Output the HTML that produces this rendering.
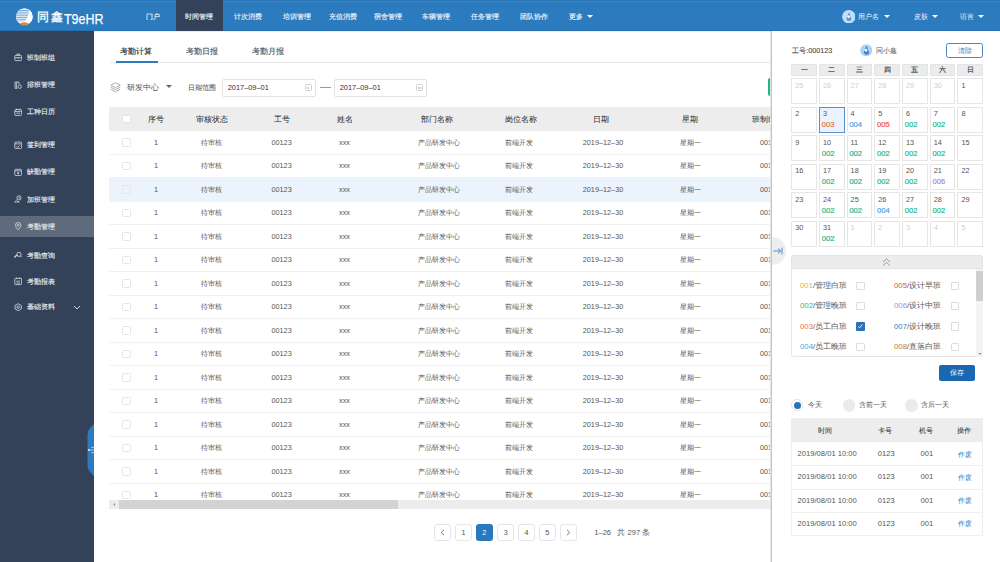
<!DOCTYPE html><html><head><meta charset="utf-8"><style>
*{margin:0;padding:0;box-sizing:border-box}
html,body{width:1000px;height:562px;overflow:hidden;background:#fff}
body{position:relative;font-family:"Liberation Sans",sans-serif;color:#555;font-size:7.5px;line-height:1}
div,span{position:absolute}
.t{white-space:nowrap;line-height:1}
.c{transform:translateX(-50%)}
.arr{width:0;height:0;border-left:3.1px solid transparent;border-right:3.1px solid transparent;border-top:3.6px solid #fff}
</style></head><body>
<div style="left:0px;top:0px;width:1000px;height:31px;background:#2c7bbf"></div>
<div style="left:0px;top:0px;width:1000px;height:1px;background:#2a76b6"></div>
<div style="left:0px;top:1px;width:1000px;height:1px;background:#3585c6"></div>
<div style="left:0px;top:30px;width:1000px;height:1px;background:#2870b0"></div>
<div style="left:94px;top:31px;width:906px;height:1px;background:#e3eef8"></div>
<div style="left:176px;top:0px;width:46.5px;height:31px;background:#344259"></div>
<svg style="position:absolute;left:15px;top:7.5px" width="19" height="19" viewBox="0 0 19 19">
<defs><clipPath id="lc"><circle cx="9.4" cy="8.7" r="8.3"/></clipPath></defs>
<circle cx="9.4" cy="8.7" r="8.3" fill="#fff"/>
<g clip-path="url(#lc)">
<path d="M0 0 H13.6 Q15.2 7 9 14.5 H0Z" fill="#d9e9f7"/>
<path d="M0 2.6h14M0 4.9h14M0 7.2h14M0 9.5h14M0 11.8h14" stroke="#7fb0de" stroke-width="1.05"/>
<path d="M13.6 0 Q15.2 7 9 14.5 L19 19 V0Z" fill="#fff"/>
</g>
<ellipse cx="9.4" cy="15.9" rx="3.8" ry="1.6" fill="#e08a34"/>
</svg>
<div class="t" style="left:37px;top:10.5px;font-size:11.6px;color:#fff;letter-spacing:2px;-webkit-text-stroke:0.3px #fff">同鑫</div>
<div class="t" style="left:63.8px;top:10.6px;font-size:15px;color:#fff;transform:scaleX(0.83);transform-origin:left;-webkit-text-stroke:0.25px #fff">T9eHR</div>
<div class="t c" style="left:153px;top:12.8px;font-size:7.4px;color:#eef3f9;-webkit-text-stroke:0.15px #eef3f9">门户</div>
<div class="t c" style="left:199px;top:12.8px;font-size:7.4px;color:#eef3f9;-webkit-text-stroke:0.15px #eef3f9">时间管理</div>
<div class="t c" style="left:248px;top:12.8px;font-size:7.4px;color:#eef3f9;-webkit-text-stroke:0.15px #eef3f9">计次消费</div>
<div class="t c" style="left:297px;top:12.8px;font-size:7.4px;color:#eef3f9;-webkit-text-stroke:0.15px #eef3f9">培训管理</div>
<div class="t c" style="left:342.5px;top:12.8px;font-size:7.4px;color:#eef3f9;-webkit-text-stroke:0.15px #eef3f9">充值消费</div>
<div class="t c" style="left:387.5px;top:12.8px;font-size:7.4px;color:#eef3f9;-webkit-text-stroke:0.15px #eef3f9">宿舍管理</div>
<div class="t c" style="left:436px;top:12.8px;font-size:7.4px;color:#eef3f9;-webkit-text-stroke:0.15px #eef3f9">车辆管理</div>
<div class="t c" style="left:485px;top:12.8px;font-size:7.4px;color:#eef3f9;-webkit-text-stroke:0.15px #eef3f9">任务管理</div>
<div class="t c" style="left:534px;top:12.8px;font-size:7.4px;color:#eef3f9;-webkit-text-stroke:0.15px #eef3f9">团队协作</div>
<div class="t c" style="left:575.5px;top:12.8px;font-size:7.4px;color:#eef3f9;-webkit-text-stroke:0.15px #eef3f9">更多</div>
<div class="arr" style="left:586.8px;top:14.8px"></div>
<svg style="position:absolute;left:841.6px;top:9.6px" width="13.6" height="13.6" viewBox="0 0 13 13">
<circle cx="6.5" cy="6.5" r="6.4" fill="#bfdffa"/>
<path d="M6.8 2.2 L5.3 5 L4.2 8.2 Q4 10.3 6.3 10.6 Q8.6 10.6 9 9 L8.3 6.8 Z" fill="#5d93cf"/>
<path d="M5.2 5.2 Q6.2 4.6 7.8 6 L6.8 7.8 Q5.6 7.6 5 6.6Z" fill="#fff"/>
</svg>
<div class="t" style="left:858px;top:12.8px;font-size:7.3px;color:#eef4fa">用户名</div>
<div class="arr" style="left:883.6px;top:14.9px"></div>
<div class="t" style="left:914px;top:12.8px;font-size:7.3px;color:#eef4fa">皮肤</div>
<div class="arr" style="left:931.6px;top:14.9px"></div>
<div class="t" style="left:960px;top:12.8px;font-size:7.3px;color:#eef4fa">语言</div>
<div class="arr" style="left:977.6px;top:14.9px"></div>
<div style="left:0px;top:31px;width:94px;height:531px;background:#344259"></div>
<div style="left:0px;top:216px;width:94px;height:20.5px;background:#5f6b7c"></div>
<div class="t" style="left:26.7px;top:53.800000000000004px;font-size:7.3px;color:#e6e9ee;-webkit-text-stroke:0.15px #e6e9ee">班制班组</div>
<svg style="position:absolute;left:13.8px;top:53.4px" width="8.4" height="8.4" viewBox="0 0 16 16" fill="none" stroke="#d3d8e0" stroke-width="1.6"><rect x="1.5" y="4.5" width="13" height="10" rx="2"/><path d="M5.5 4.5V2.2h5v2.3M1.5 9h13"/><rect x="7" y="8" width="2" height="2.5" fill="#d3d8e0" stroke="none"/></svg>
<div class="t" style="left:26.7px;top:81.4px;font-size:7.3px;color:#e6e9ee;-webkit-text-stroke:0.15px #e6e9ee">排班管理</div>
<svg style="position:absolute;left:13.8px;top:81.0px" width="8.4" height="8.4" viewBox="0 0 16 16" fill="none" stroke="#d3d8e0" stroke-width="1.6"><path d="M9.5 6.5V2H2v12h4"/><path d="M4.5 2v12"/><circle cx="10.8" cy="10.8" r="3.3"/></svg>
<div class="t" style="left:26.7px;top:108.4px;font-size:7.3px;color:#e6e9ee;-webkit-text-stroke:0.15px #e6e9ee">工种日历</div>
<svg style="position:absolute;left:13.8px;top:108.0px" width="8.4" height="8.4" viewBox="0 0 16 16" fill="none" stroke="#d3d8e0" stroke-width="1.6"><rect x="1.5" y="3" width="13" height="11.5" rx="2"/><path d="M4.5 1v3M11.5 1v3M1.5 6.5h13M4.5 10h7"/></svg>
<div class="t" style="left:26.7px;top:141.29999999999998px;font-size:7.3px;color:#e6e9ee;-webkit-text-stroke:0.15px #e6e9ee">签到管理</div>
<svg style="position:absolute;left:13.8px;top:140.9px" width="8.4" height="8.4" viewBox="0 0 16 16" fill="none" stroke="#d3d8e0" stroke-width="1.6"><rect x="1.5" y="2" width="13" height="12.5" rx="2"/><path d="M1.5 5.5h13M4.5 10.5l2 1.6 4.5-3.5"/></svg>
<div class="t" style="left:26.7px;top:168.39999999999998px;font-size:7.3px;color:#e6e9ee;-webkit-text-stroke:0.15px #e6e9ee">缺勤管理</div>
<svg style="position:absolute;left:13.8px;top:168.0px" width="8.4" height="8.4" viewBox="0 0 16 16" fill="none" stroke="#d3d8e0" stroke-width="1.6"><rect x="1.5" y="2.5" width="13" height="12" rx="2"/><path d="M1.5 5.5h13"/><rect x="6.3" y="8.3" width="3.4" height="3.4" fill="#d3d8e0" stroke="none"/></svg>
<div class="t" style="left:26.7px;top:195.6px;font-size:7.3px;color:#e6e9ee;-webkit-text-stroke:0.15px #e6e9ee">加班管理</div>
<svg style="position:absolute;left:13.8px;top:195.20000000000002px" width="8.4" height="8.4" viewBox="0 0 16 16" fill="none" stroke="#d3d8e0" stroke-width="1.6"><circle cx="9.5" cy="5.5" r="4"/><path d="M9.5 3.5v2.3h1.8M2 15c0-3 1.5-5 4-5.5M5.5 15v-2.5h4V15"/></svg>
<div class="t" style="left:26.7px;top:222.7px;font-size:7.3px;color:#e6e9ee;-webkit-text-stroke:0.15px #e6e9ee">考勤管理</div>
<svg style="position:absolute;left:13.8px;top:222.3px" width="8.4" height="8.4" viewBox="0 0 16 16" fill="none" stroke="#d3d8e0" stroke-width="1.6"><path d="M8 15C4.5 11 2.8 8.6 2.8 6.2a5.2 5.2 0 0 1 10.4 0C13.2 8.6 11.5 11 8 15z"/><circle cx="8" cy="6.2" r="1.9"/></svg>
<div class="t" style="left:26.7px;top:251.5px;font-size:7.3px;color:#e6e9ee;-webkit-text-stroke:0.15px #e6e9ee">考勤查询</div>
<svg style="position:absolute;left:13.8px;top:251.10000000000002px" width="8.4" height="8.4" viewBox="0 0 16 16" fill="none" stroke="#d3d8e0" stroke-width="1.6"><circle cx="9.5" cy="6.5" r="4"/><path d="M12.5 9.5l2.8 2.8"/><path d="M1.5 13a4.5 4.5 0 0 1 5.5-4.5" stroke-width="2.6"/></svg>
<div class="t" style="left:26.7px;top:277.8px;font-size:7.3px;color:#e6e9ee;-webkit-text-stroke:0.15px #e6e9ee">考勤报表</div>
<svg style="position:absolute;left:13.8px;top:277.40000000000003px" width="8.4" height="8.4" viewBox="0 0 16 16" fill="none" stroke="#d3d8e0" stroke-width="1.6"><rect x="1.5" y="2.5" width="13" height="12" rx="1.5"/><path d="M5 1v3M11 1v3M4.5 8h7M4.5 11.5h7"/></svg>
<div class="t" style="left:26.7px;top:303.4px;font-size:7.3px;color:#e6e9ee;-webkit-text-stroke:0.15px #e6e9ee">基础资料</div>
<svg style="position:absolute;left:13.8px;top:303.0px" width="8.4" height="8.4" viewBox="0 0 16 16" fill="none" stroke="#d3d8e0" stroke-width="1.6"><path d="M8 1.3l6 3.4v6.6l-6 3.4-6-3.4V4.7z"/><circle cx="8" cy="8" r="2.4"/></svg>
<svg style="position:absolute;left:73px;top:305px" width="8" height="5" viewBox="0 0 8 5"><path d="M1 1 L4 4 L7 1" stroke="#d0d6de" stroke-width="1" fill="none"/></svg>
<svg style="position:absolute;left:87px;top:423.5px" width="7" height="52" viewBox="0 0 7 52"><path d="M7 0 V52 L3 48 Q0.5 45 0.5 41 V11 Q0.5 7 3 4 Z" fill="#2c7bbf"/><circle cx="1.8" cy="26" r="0.9" fill="#e6f1fb"/><path d="M2 26h5M4.3 23.3h2.7M4.3 28.7h2.7" stroke="#cfe2f5" stroke-width="0.8"/></svg>
<div style="left:109.5px;top:62px;width:662px;height:1px;background:#e9e9e9"></div>
<div class="t" style="left:120.4px;top:48.2px;font-size:8.2px;color:#3a3a3a;-webkit-text-stroke:0.2px #3a3a3a">考勤计算</div>
<div class="t" style="left:186.4px;top:48.2px;font-size:8.2px;color:#555;-webkit-text-stroke:0.15px #555">考勤日报</div>
<div class="t" style="left:252px;top:48.2px;font-size:8.2px;color:#555;-webkit-text-stroke:0.15px #555">考勤月报</div>
<div style="left:116px;top:60.5px;width:42px;height:2px;background:#2c7bbf"></div>
<svg style="position:absolute;left:110px;top:82px" width="11" height="11" viewBox="0 0 11 11">
<path d="M5.5 0.8 L10.2 3.2 L5.5 5.6 L0.8 3.2Z M0.8 5.2 L5.5 7.6 L10.2 5.2 M0.8 7.3 L5.5 9.7 L10.2 7.3" stroke="#999" stroke-width="0.8" fill="none"/>
</svg>
<div class="t" style="left:127px;top:83.3px;font-size:8.4px;color:#555">研发中心</div>
<div class="arr" style="left:165.8px;top:84.6px;border-top-color:#666;border-left-width:3px;border-right-width:3px;border-top-width:3.6px"></div>
<div class="t" style="left:187.5px;top:83.9px;font-size:7.3px;color:#666;-webkit-text-stroke:0.1px #666">日期范围</div>
<div style="left:222.4px;top:78.8px;width:93.6px;height:18px;border:1px solid #e2e2e2;border-radius:2px;background:#fff"></div>
<div class="t" style="left:227.70000000000002px;top:84px;font-size:7.4px;color:#333">2017–09–01</div>
<div style="left:304.5px;top:84.2px;width:7px;height:7px;border:1px solid #d0d0d0;border-radius:1.5px"></div>
<div style="left:306.8px;top:86.8px;width:2.6px;height:2.2px;border:0.7px solid #d0d0d0"></div>
<div style="left:334.4px;top:78.8px;width:93px;height:18px;border:1px solid #e2e2e2;border-radius:2px;background:#fff"></div>
<div class="t" style="left:339.7px;top:84px;font-size:7.4px;color:#333">2017–09–01</div>
<div style="left:415.9px;top:84.2px;width:7px;height:7px;border:1px solid #d0d0d0;border-radius:1.5px"></div>
<div style="left:418.2px;top:86.8px;width:2.6px;height:2.2px;border:0.7px solid #d0d0d0"></div>
<div style="left:320px;top:87.3px;width:10.5px;height:1px;background:#999"></div>
<div style="left:767.5px;top:78px;width:20px;height:18px;background:#1db58a;border-radius:2px"></div>
<div style="left:109.4px;top:107px;width:661.6px;height:23.5px;background:#ededed"></div>
<div class="t c" style="left:156px;top:116.3px;font-size:7.5px;color:#333;-webkit-text-stroke:0.05px #333">序号</div>
<div class="t c" style="left:211.6px;top:116.3px;font-size:7.5px;color:#333;-webkit-text-stroke:0.05px #333">审核状态</div>
<div class="t c" style="left:281.6px;top:116.3px;font-size:7.5px;color:#333;-webkit-text-stroke:0.05px #333">工号</div>
<div class="t c" style="left:344.5px;top:116.3px;font-size:7.5px;color:#333;-webkit-text-stroke:0.05px #333">姓名</div>
<div class="t c" style="left:436.8px;top:116.3px;font-size:7.5px;color:#333;-webkit-text-stroke:0.05px #333">部门名称</div>
<div class="t c" style="left:521px;top:116.3px;font-size:7.5px;color:#333;-webkit-text-stroke:0.05px #333">岗位名称</div>
<div class="t c" style="left:601px;top:116.3px;font-size:7.5px;color:#333;-webkit-text-stroke:0.05px #333">日期</div>
<div class="t c" style="left:690px;top:116.3px;font-size:7.5px;color:#333;-webkit-text-stroke:0.05px #333">星期</div>
<div class="t" style="left:752px;top:116.3px;font-size:7.5px;color:#333;-webkit-text-stroke:0.05px #333">班制编号</div>
<div style="left:122.3px;top:114.8px;width:8.5px;height:8.5px;border:1px solid #e3e3e3;background:#fff;border-radius:1.5px"></div>
<div style="left:0;top:0;width:1000px;height:500px;overflow:hidden">
<div style="left:109.4px;top:153.5px;width:661.6px;height:1px;background:#f1f1f1"></div>
<div class="t c" style="left:156px;top:138.95px;font-size:7.3px;color:#555">1</div>
<div class="t c" style="left:211.6px;top:138.95px;font-size:7.3px;color:#555">待审核</div>
<div class="t c" style="left:281.6px;top:138.95px;font-size:7.3px;color:#555">00123</div>
<div class="t c" style="left:344.5px;top:138.95px;font-size:7.3px;color:#555">xxx</div>
<div class="t c" style="left:439px;top:138.95px;font-size:7.3px;color:#555">产品研发中心</div>
<div class="t c" style="left:519px;top:138.95px;font-size:7.3px;color:#555">前端开发</div>
<div class="t c" style="left:603px;top:138.95px;font-size:7.3px;color:#555">2019–12–30</div>
<div class="t c" style="left:690px;top:138.95px;font-size:7.3px;color:#555">星期一</div>
<div class="t" style="left:760px;top:138.95px;font-size:7.3px;color:#555">001</div>
<div style="left:122.3px;top:138.05px;width:8.5px;height:8.5px;border:1px solid #e6e6e6;background:#fff;border-radius:1.5px"></div>
<div style="left:109.4px;top:177.0px;width:661.6px;height:1px;background:#f1f1f1"></div>
<div class="t c" style="left:156px;top:162.45px;font-size:7.3px;color:#555">1</div>
<div class="t c" style="left:211.6px;top:162.45px;font-size:7.3px;color:#555">待审核</div>
<div class="t c" style="left:281.6px;top:162.45px;font-size:7.3px;color:#555">00123</div>
<div class="t c" style="left:344.5px;top:162.45px;font-size:7.3px;color:#555">xxx</div>
<div class="t c" style="left:439px;top:162.45px;font-size:7.3px;color:#555">产品研发中心</div>
<div class="t c" style="left:519px;top:162.45px;font-size:7.3px;color:#555">前端开发</div>
<div class="t c" style="left:603px;top:162.45px;font-size:7.3px;color:#555">2019–12–30</div>
<div class="t c" style="left:690px;top:162.45px;font-size:7.3px;color:#555">星期一</div>
<div class="t" style="left:760px;top:162.45px;font-size:7.3px;color:#555">001</div>
<div style="left:122.3px;top:161.55px;width:8.5px;height:8.5px;border:1px solid #e6e6e6;background:#fff;border-radius:1.5px"></div>
<div style="left:109.4px;top:177.5px;width:661.6px;height:23.5px;background:#ebf3fc"></div>
<div style="left:109.4px;top:200.5px;width:661.6px;height:1px;background:#f1f1f1"></div>
<div class="t c" style="left:156px;top:185.95px;font-size:7.3px;color:#555">1</div>
<div class="t c" style="left:211.6px;top:185.95px;font-size:7.3px;color:#555">待审核</div>
<div class="t c" style="left:281.6px;top:185.95px;font-size:7.3px;color:#555">00123</div>
<div class="t c" style="left:344.5px;top:185.95px;font-size:7.3px;color:#555">xxx</div>
<div class="t c" style="left:439px;top:185.95px;font-size:7.3px;color:#555">产品研发中心</div>
<div class="t c" style="left:519px;top:185.95px;font-size:7.3px;color:#555">前端开发</div>
<div class="t c" style="left:603px;top:185.95px;font-size:7.3px;color:#555">2019–12–30</div>
<div class="t c" style="left:690px;top:185.95px;font-size:7.3px;color:#555">星期一</div>
<div class="t" style="left:760px;top:185.95px;font-size:7.3px;color:#555">001</div>
<div style="left:122.3px;top:185.05px;width:8.5px;height:8.5px;border:1px solid #e6e6e6;background:#ebf3fc;border-radius:1.5px"></div>
<div style="left:109.4px;top:224.0px;width:661.6px;height:1px;background:#f1f1f1"></div>
<div class="t c" style="left:156px;top:209.45px;font-size:7.3px;color:#555">1</div>
<div class="t c" style="left:211.6px;top:209.45px;font-size:7.3px;color:#555">待审核</div>
<div class="t c" style="left:281.6px;top:209.45px;font-size:7.3px;color:#555">00123</div>
<div class="t c" style="left:344.5px;top:209.45px;font-size:7.3px;color:#555">xxx</div>
<div class="t c" style="left:439px;top:209.45px;font-size:7.3px;color:#555">产品研发中心</div>
<div class="t c" style="left:519px;top:209.45px;font-size:7.3px;color:#555">前端开发</div>
<div class="t c" style="left:603px;top:209.45px;font-size:7.3px;color:#555">2019–12–30</div>
<div class="t c" style="left:690px;top:209.45px;font-size:7.3px;color:#555">星期一</div>
<div class="t" style="left:760px;top:209.45px;font-size:7.3px;color:#555">001</div>
<div style="left:122.3px;top:208.55px;width:8.5px;height:8.5px;border:1px solid #e6e6e6;background:#fff;border-radius:1.5px"></div>
<div style="left:109.4px;top:247.5px;width:661.6px;height:1px;background:#f1f1f1"></div>
<div class="t c" style="left:156px;top:232.95px;font-size:7.3px;color:#555">1</div>
<div class="t c" style="left:211.6px;top:232.95px;font-size:7.3px;color:#555">待审核</div>
<div class="t c" style="left:281.6px;top:232.95px;font-size:7.3px;color:#555">00123</div>
<div class="t c" style="left:344.5px;top:232.95px;font-size:7.3px;color:#555">xxx</div>
<div class="t c" style="left:439px;top:232.95px;font-size:7.3px;color:#555">产品研发中心</div>
<div class="t c" style="left:519px;top:232.95px;font-size:7.3px;color:#555">前端开发</div>
<div class="t c" style="left:603px;top:232.95px;font-size:7.3px;color:#555">2019–12–30</div>
<div class="t c" style="left:690px;top:232.95px;font-size:7.3px;color:#555">星期一</div>
<div class="t" style="left:760px;top:232.95px;font-size:7.3px;color:#555">001</div>
<div style="left:122.3px;top:232.05px;width:8.5px;height:8.5px;border:1px solid #e6e6e6;background:#fff;border-radius:1.5px"></div>
<div style="left:109.4px;top:271.0px;width:661.6px;height:1px;background:#f1f1f1"></div>
<div class="t c" style="left:156px;top:256.45px;font-size:7.3px;color:#555">1</div>
<div class="t c" style="left:211.6px;top:256.45px;font-size:7.3px;color:#555">待审核</div>
<div class="t c" style="left:281.6px;top:256.45px;font-size:7.3px;color:#555">00123</div>
<div class="t c" style="left:344.5px;top:256.45px;font-size:7.3px;color:#555">xxx</div>
<div class="t c" style="left:439px;top:256.45px;font-size:7.3px;color:#555">产品研发中心</div>
<div class="t c" style="left:519px;top:256.45px;font-size:7.3px;color:#555">前端开发</div>
<div class="t c" style="left:603px;top:256.45px;font-size:7.3px;color:#555">2019–12–30</div>
<div class="t c" style="left:690px;top:256.45px;font-size:7.3px;color:#555">星期一</div>
<div class="t" style="left:760px;top:256.45px;font-size:7.3px;color:#555">001</div>
<div style="left:122.3px;top:255.55px;width:8.5px;height:8.5px;border:1px solid #e6e6e6;background:#fff;border-radius:1.5px"></div>
<div style="left:109.4px;top:294.5px;width:661.6px;height:1px;background:#f1f1f1"></div>
<div class="t c" style="left:156px;top:279.95px;font-size:7.3px;color:#555">1</div>
<div class="t c" style="left:211.6px;top:279.95px;font-size:7.3px;color:#555">待审核</div>
<div class="t c" style="left:281.6px;top:279.95px;font-size:7.3px;color:#555">00123</div>
<div class="t c" style="left:344.5px;top:279.95px;font-size:7.3px;color:#555">xxx</div>
<div class="t c" style="left:439px;top:279.95px;font-size:7.3px;color:#555">产品研发中心</div>
<div class="t c" style="left:519px;top:279.95px;font-size:7.3px;color:#555">前端开发</div>
<div class="t c" style="left:603px;top:279.95px;font-size:7.3px;color:#555">2019–12–30</div>
<div class="t c" style="left:690px;top:279.95px;font-size:7.3px;color:#555">星期一</div>
<div class="t" style="left:760px;top:279.95px;font-size:7.3px;color:#555">001</div>
<div style="left:122.3px;top:279.05px;width:8.5px;height:8.5px;border:1px solid #e6e6e6;background:#fff;border-radius:1.5px"></div>
<div style="left:109.4px;top:318.0px;width:661.6px;height:1px;background:#f1f1f1"></div>
<div class="t c" style="left:156px;top:303.45px;font-size:7.3px;color:#555">1</div>
<div class="t c" style="left:211.6px;top:303.45px;font-size:7.3px;color:#555">待审核</div>
<div class="t c" style="left:281.6px;top:303.45px;font-size:7.3px;color:#555">00123</div>
<div class="t c" style="left:344.5px;top:303.45px;font-size:7.3px;color:#555">xxx</div>
<div class="t c" style="left:439px;top:303.45px;font-size:7.3px;color:#555">产品研发中心</div>
<div class="t c" style="left:519px;top:303.45px;font-size:7.3px;color:#555">前端开发</div>
<div class="t c" style="left:603px;top:303.45px;font-size:7.3px;color:#555">2019–12–30</div>
<div class="t c" style="left:690px;top:303.45px;font-size:7.3px;color:#555">星期一</div>
<div class="t" style="left:760px;top:303.45px;font-size:7.3px;color:#555">001</div>
<div style="left:122.3px;top:302.55px;width:8.5px;height:8.5px;border:1px solid #e6e6e6;background:#fff;border-radius:1.5px"></div>
<div style="left:109.4px;top:341.5px;width:661.6px;height:1px;background:#f1f1f1"></div>
<div class="t c" style="left:156px;top:326.95px;font-size:7.3px;color:#555">1</div>
<div class="t c" style="left:211.6px;top:326.95px;font-size:7.3px;color:#555">待审核</div>
<div class="t c" style="left:281.6px;top:326.95px;font-size:7.3px;color:#555">00123</div>
<div class="t c" style="left:344.5px;top:326.95px;font-size:7.3px;color:#555">xxx</div>
<div class="t c" style="left:439px;top:326.95px;font-size:7.3px;color:#555">产品研发中心</div>
<div class="t c" style="left:519px;top:326.95px;font-size:7.3px;color:#555">前端开发</div>
<div class="t c" style="left:603px;top:326.95px;font-size:7.3px;color:#555">2019–12–30</div>
<div class="t c" style="left:690px;top:326.95px;font-size:7.3px;color:#555">星期一</div>
<div class="t" style="left:760px;top:326.95px;font-size:7.3px;color:#555">001</div>
<div style="left:122.3px;top:326.05px;width:8.5px;height:8.5px;border:1px solid #e6e6e6;background:#fff;border-radius:1.5px"></div>
<div style="left:109.4px;top:365.0px;width:661.6px;height:1px;background:#f1f1f1"></div>
<div class="t c" style="left:156px;top:350.45px;font-size:7.3px;color:#555">1</div>
<div class="t c" style="left:211.6px;top:350.45px;font-size:7.3px;color:#555">待审核</div>
<div class="t c" style="left:281.6px;top:350.45px;font-size:7.3px;color:#555">00123</div>
<div class="t c" style="left:344.5px;top:350.45px;font-size:7.3px;color:#555">xxx</div>
<div class="t c" style="left:439px;top:350.45px;font-size:7.3px;color:#555">产品研发中心</div>
<div class="t c" style="left:519px;top:350.45px;font-size:7.3px;color:#555">前端开发</div>
<div class="t c" style="left:603px;top:350.45px;font-size:7.3px;color:#555">2019–12–30</div>
<div class="t c" style="left:690px;top:350.45px;font-size:7.3px;color:#555">星期一</div>
<div class="t" style="left:760px;top:350.45px;font-size:7.3px;color:#555">001</div>
<div style="left:122.3px;top:349.55px;width:8.5px;height:8.5px;border:1px solid #e6e6e6;background:#fff;border-radius:1.5px"></div>
<div style="left:109.4px;top:388.5px;width:661.6px;height:1px;background:#f1f1f1"></div>
<div class="t c" style="left:156px;top:373.95px;font-size:7.3px;color:#555">1</div>
<div class="t c" style="left:211.6px;top:373.95px;font-size:7.3px;color:#555">待审核</div>
<div class="t c" style="left:281.6px;top:373.95px;font-size:7.3px;color:#555">00123</div>
<div class="t c" style="left:344.5px;top:373.95px;font-size:7.3px;color:#555">xxx</div>
<div class="t c" style="left:439px;top:373.95px;font-size:7.3px;color:#555">产品研发中心</div>
<div class="t c" style="left:519px;top:373.95px;font-size:7.3px;color:#555">前端开发</div>
<div class="t c" style="left:603px;top:373.95px;font-size:7.3px;color:#555">2019–12–30</div>
<div class="t c" style="left:690px;top:373.95px;font-size:7.3px;color:#555">星期一</div>
<div class="t" style="left:760px;top:373.95px;font-size:7.3px;color:#555">001</div>
<div style="left:122.3px;top:373.05px;width:8.5px;height:8.5px;border:1px solid #e6e6e6;background:#fff;border-radius:1.5px"></div>
<div style="left:109.4px;top:412.0px;width:661.6px;height:1px;background:#f1f1f1"></div>
<div class="t c" style="left:156px;top:397.45px;font-size:7.3px;color:#555">1</div>
<div class="t c" style="left:211.6px;top:397.45px;font-size:7.3px;color:#555">待审核</div>
<div class="t c" style="left:281.6px;top:397.45px;font-size:7.3px;color:#555">00123</div>
<div class="t c" style="left:344.5px;top:397.45px;font-size:7.3px;color:#555">xxx</div>
<div class="t c" style="left:439px;top:397.45px;font-size:7.3px;color:#555">产品研发中心</div>
<div class="t c" style="left:519px;top:397.45px;font-size:7.3px;color:#555">前端开发</div>
<div class="t c" style="left:603px;top:397.45px;font-size:7.3px;color:#555">2019–12–30</div>
<div class="t c" style="left:690px;top:397.45px;font-size:7.3px;color:#555">星期一</div>
<div class="t" style="left:760px;top:397.45px;font-size:7.3px;color:#555">001</div>
<div style="left:122.3px;top:396.55px;width:8.5px;height:8.5px;border:1px solid #e6e6e6;background:#fff;border-radius:1.5px"></div>
<div style="left:109.4px;top:435.5px;width:661.6px;height:1px;background:#f1f1f1"></div>
<div class="t c" style="left:156px;top:420.95px;font-size:7.3px;color:#555">1</div>
<div class="t c" style="left:211.6px;top:420.95px;font-size:7.3px;color:#555">待审核</div>
<div class="t c" style="left:281.6px;top:420.95px;font-size:7.3px;color:#555">00123</div>
<div class="t c" style="left:344.5px;top:420.95px;font-size:7.3px;color:#555">xxx</div>
<div class="t c" style="left:439px;top:420.95px;font-size:7.3px;color:#555">产品研发中心</div>
<div class="t c" style="left:519px;top:420.95px;font-size:7.3px;color:#555">前端开发</div>
<div class="t c" style="left:603px;top:420.95px;font-size:7.3px;color:#555">2019–12–30</div>
<div class="t c" style="left:690px;top:420.95px;font-size:7.3px;color:#555">星期一</div>
<div class="t" style="left:760px;top:420.95px;font-size:7.3px;color:#555">001</div>
<div style="left:122.3px;top:420.05px;width:8.5px;height:8.5px;border:1px solid #e6e6e6;background:#fff;border-radius:1.5px"></div>
<div style="left:109.4px;top:459.0px;width:661.6px;height:1px;background:#f1f1f1"></div>
<div class="t c" style="left:156px;top:444.45px;font-size:7.3px;color:#555">1</div>
<div class="t c" style="left:211.6px;top:444.45px;font-size:7.3px;color:#555">待审核</div>
<div class="t c" style="left:281.6px;top:444.45px;font-size:7.3px;color:#555">00123</div>
<div class="t c" style="left:344.5px;top:444.45px;font-size:7.3px;color:#555">xxx</div>
<div class="t c" style="left:439px;top:444.45px;font-size:7.3px;color:#555">产品研发中心</div>
<div class="t c" style="left:519px;top:444.45px;font-size:7.3px;color:#555">前端开发</div>
<div class="t c" style="left:603px;top:444.45px;font-size:7.3px;color:#555">2019–12–30</div>
<div class="t c" style="left:690px;top:444.45px;font-size:7.3px;color:#555">星期一</div>
<div class="t" style="left:760px;top:444.45px;font-size:7.3px;color:#555">001</div>
<div style="left:122.3px;top:443.55px;width:8.5px;height:8.5px;border:1px solid #e6e6e6;background:#fff;border-radius:1.5px"></div>
<div style="left:109.4px;top:482.5px;width:661.6px;height:1px;background:#f1f1f1"></div>
<div class="t c" style="left:156px;top:467.95px;font-size:7.3px;color:#555">1</div>
<div class="t c" style="left:211.6px;top:467.95px;font-size:7.3px;color:#555">待审核</div>
<div class="t c" style="left:281.6px;top:467.95px;font-size:7.3px;color:#555">00123</div>
<div class="t c" style="left:344.5px;top:467.95px;font-size:7.3px;color:#555">xxx</div>
<div class="t c" style="left:439px;top:467.95px;font-size:7.3px;color:#555">产品研发中心</div>
<div class="t c" style="left:519px;top:467.95px;font-size:7.3px;color:#555">前端开发</div>
<div class="t c" style="left:603px;top:467.95px;font-size:7.3px;color:#555">2019–12–30</div>
<div class="t c" style="left:690px;top:467.95px;font-size:7.3px;color:#555">星期一</div>
<div class="t" style="left:760px;top:467.95px;font-size:7.3px;color:#555">001</div>
<div style="left:122.3px;top:467.05px;width:8.5px;height:8.5px;border:1px solid #e6e6e6;background:#fff;border-radius:1.5px"></div>
<div style="left:109.4px;top:506.0px;width:661.6px;height:1px;background:#f1f1f1"></div>
<div class="t c" style="left:156px;top:491.45px;font-size:7.3px;color:#555">1</div>
<div class="t c" style="left:211.6px;top:491.45px;font-size:7.3px;color:#555">待审核</div>
<div class="t c" style="left:281.6px;top:491.45px;font-size:7.3px;color:#555">00123</div>
<div class="t c" style="left:344.5px;top:491.45px;font-size:7.3px;color:#555">xxx</div>
<div class="t c" style="left:439px;top:491.45px;font-size:7.3px;color:#555">产品研发中心</div>
<div class="t c" style="left:519px;top:491.45px;font-size:7.3px;color:#555">前端开发</div>
<div class="t c" style="left:603px;top:491.45px;font-size:7.3px;color:#555">2019–12–30</div>
<div class="t c" style="left:690px;top:491.45px;font-size:7.3px;color:#555">星期一</div>
<div class="t" style="left:760px;top:491.45px;font-size:7.3px;color:#555">001</div>
<div style="left:122.3px;top:490.55px;width:8.5px;height:8.5px;border:1px solid #e6e6e6;background:#fff;border-radius:1.5px"></div>
</div>
<div style="left:109.4px;top:500.2px;width:661.6px;height:9.3px;background:#ececec"></div>
<div style="left:118.6px;top:500.2px;width:279.6px;height:9.3px;background:#d3d3d3"></div>
<svg style="position:absolute;left:112px;top:502px" width="5" height="5" viewBox="0 0 5 5"><path d="M3 1 L1.3 2.5 L3 4Z" fill="#888"/></svg>
<div style="left:434.3px;top:523.5px;width:17px;height:17px;border:1px solid #e6e6e6;border-radius:3px;background:#fff"></div>
<svg style="position:absolute;left:440.3px;top:529px" width="5" height="7" viewBox="0 0 5 7"><path d="M4 0.8 L1.2 3.5 L4 6.2" stroke="#666" stroke-width="0.9" fill="none"/></svg>
<div style="left:455.1px;top:523.5px;width:17px;height:17px;border:1px solid #e6e6e6;border-radius:3px;background:#fff"></div>
<div class="t c" style="left:463.6px;top:528.8px;font-size:7.3px;color:#555">1</div>
<div style="left:475.9px;top:523.5px;width:17px;height:17px;background:#2a78bd;border-radius:3px"></div>
<div class="t c" style="left:484.4px;top:528.8px;font-size:7.3px;color:#fff">2</div>
<div style="left:497.2px;top:523.5px;width:17px;height:17px;border:1px solid #e6e6e6;border-radius:3px;background:#fff"></div>
<div class="t c" style="left:505.7px;top:528.8px;font-size:7.3px;color:#555">3</div>
<div style="left:518px;top:523.5px;width:17px;height:17px;border:1px solid #e6e6e6;border-radius:3px;background:#fff"></div>
<div class="t c" style="left:526.5px;top:528.8px;font-size:7.3px;color:#555">4</div>
<div style="left:538.8px;top:523.5px;width:17px;height:17px;border:1px solid #e6e6e6;border-radius:3px;background:#fff"></div>
<div class="t c" style="left:547.3px;top:528.8px;font-size:7.3px;color:#555">5</div>
<div style="left:559.6px;top:523.5px;width:17px;height:17px;border:1px solid #e6e6e6;border-radius:3px;background:#fff"></div>
<svg style="position:absolute;left:565.6px;top:529px" width="5" height="7" viewBox="0 0 5 7"><path d="M1 0.8 L3.8 3.5 L1 6.2" stroke="#666" stroke-width="0.9" fill="none"/></svg>
<div class="t" style="left:594.2px;top:528.8px;font-size:7.6px;color:#555">1–26&nbsp;&nbsp;&nbsp;共&nbsp;297&nbsp;条</div>
<div style="left:771px;top:31px;width:229px;height:531px;background:#fff;border-left:1px solid #c4c4c4;box-shadow:-1px 0 0 #e4e4e4"></div>
<svg style="position:absolute;left:771.5px;top:237px" width="15" height="28" viewBox="0 0 15 28">
<path d="M0 0 A14 14 0 0 1 0 28 Z" fill="#eeeeee"/>
<path d="M1.5 14 H8.5 M6 11.5 L8.7 14 L6 16.5 M10 10.5 V17.5" stroke="#4a8ac9" stroke-width="1" fill="none"/>
</svg>
<div class="t" style="left:792.3px;top:46.8px;font-size:7.2px;color:#4a4a4a;-webkit-text-stroke:0.1px #4a4a4a">工号:000123</div>
<svg style="position:absolute;left:860px;top:43.9px" width="12.4" height="12.4" viewBox="0 0 13 13">
<circle cx="6.5" cy="6.5" r="6.3" fill="#a6d2f6"/>
<path d="M7 1.8 L5.3 4.8 L4 8.4 Q3.8 10.8 6.5 11.2 Q9.2 11.2 9.6 9.4 L8.6 6.6 Z" fill="#3f80cc"/>
<path d="M5 5.2 Q6.2 4.4 8 6 L6.9 8.1 Q5.5 7.9 4.8 6.7Z" fill="#fff"/>
</svg>
<div class="t" style="left:876.3px;top:46.5px;font-size:7.2px;color:#555">同小鑫</div>
<div style="left:946.4px;top:43.1px;width:36.3px;height:15.2px;border:1px solid #4a86c3;border-radius:2.5px;background:#fff"></div>
<div class="t c" style="left:964.5px;top:47px;font-size:7.2px;color:#3a7cc0">清除</div>
<div style="left:791.2px;top:63.8px;width:25.7px;height:12.2px;background:#ececec;border:1px solid #e4e4e4;border-radius:1px"></div>
<div class="t c" style="left:804.0500000000001px;top:66.3px;font-size:7px;color:#3a3a3a;-webkit-text-stroke:0.15px #3a3a3a">一</div>
<div style="left:818.9000000000001px;top:63.8px;width:25.7px;height:12.2px;background:#ececec;border:1px solid #e4e4e4;border-radius:1px"></div>
<div class="t c" style="left:831.7500000000001px;top:66.3px;font-size:7px;color:#3a3a3a;-webkit-text-stroke:0.15px #3a3a3a">二</div>
<div style="left:846.6px;top:63.8px;width:25.7px;height:12.2px;background:#ececec;border:1px solid #e4e4e4;border-radius:1px"></div>
<div class="t c" style="left:859.45px;top:66.3px;font-size:7px;color:#3a3a3a;-webkit-text-stroke:0.15px #3a3a3a">三</div>
<div style="left:874.3000000000001px;top:63.8px;width:25.7px;height:12.2px;background:#ececec;border:1px solid #e4e4e4;border-radius:1px"></div>
<div class="t c" style="left:887.1500000000001px;top:66.3px;font-size:7px;color:#3a3a3a;-webkit-text-stroke:0.15px #3a3a3a">四</div>
<div style="left:902.0px;top:63.8px;width:25.7px;height:12.2px;background:#ececec;border:1px solid #e4e4e4;border-radius:1px"></div>
<div class="t c" style="left:914.85px;top:66.3px;font-size:7px;color:#3a3a3a;-webkit-text-stroke:0.15px #3a3a3a">五</div>
<div style="left:929.7px;top:63.8px;width:25.7px;height:12.2px;background:#ececec;border:1px solid #e4e4e4;border-radius:1px"></div>
<div class="t c" style="left:942.5500000000001px;top:66.3px;font-size:7px;color:#3a3a3a;-webkit-text-stroke:0.15px #3a3a3a">六</div>
<div style="left:957.4000000000001px;top:63.8px;width:25.7px;height:12.2px;background:#ececec;border:1px solid #e4e4e4;border-radius:1px"></div>
<div class="t c" style="left:970.2500000000001px;top:66.3px;font-size:7px;color:#3a3a3a;-webkit-text-stroke:0.15px #3a3a3a">日</div>
<div style="left:791.2px;top:78.1px;width:25.7px;height:26.2px;border:1px solid #e6e6e6;background:#fff"></div>
<div class="t" style="left:795.2px;top:81.6px;font-size:7.3px;color:#d0d0d0">25</div>
<div style="left:818.9000000000001px;top:78.1px;width:25.7px;height:26.2px;border:1px solid #e6e6e6;background:#fff"></div>
<div class="t" style="left:822.9000000000001px;top:81.6px;font-size:7.3px;color:#d0d0d0">26</div>
<div style="left:846.6px;top:78.1px;width:25.7px;height:26.2px;border:1px solid #e6e6e6;background:#fff"></div>
<div class="t" style="left:850.6px;top:81.6px;font-size:7.3px;color:#d0d0d0">27</div>
<div style="left:874.3000000000001px;top:78.1px;width:25.7px;height:26.2px;border:1px solid #e6e6e6;background:#fff"></div>
<div class="t" style="left:878.3000000000001px;top:81.6px;font-size:7.3px;color:#d0d0d0">28</div>
<div style="left:902.0px;top:78.1px;width:25.7px;height:26.2px;border:1px solid #e6e6e6;background:#fff"></div>
<div class="t" style="left:906.0px;top:81.6px;font-size:7.3px;color:#d0d0d0">29</div>
<div style="left:929.7px;top:78.1px;width:25.7px;height:26.2px;border:1px solid #e6e6e6;background:#fff"></div>
<div class="t" style="left:933.7px;top:81.6px;font-size:7.3px;color:#d0d0d0">30</div>
<div style="left:957.4000000000001px;top:78.1px;width:25.7px;height:26.2px;border:1px solid #e6e6e6;background:#fff"></div>
<div class="t" style="left:961.4000000000001px;top:81.6px;font-size:7.3px;color:#555">1</div>
<div style="left:791.2px;top:106.63999999999999px;width:25.7px;height:26.2px;border:1px solid #e6e6e6;background:#fff"></div>
<div class="t" style="left:795.2px;top:110.13999999999999px;font-size:7.3px;color:#555">2</div>
<div style="left:818.9000000000001px;top:106.63999999999999px;width:25.7px;height:26.2px;border:1px solid #5b8fc8;background:#eaf3fd"></div>
<div class="t" style="left:822.9000000000001px;top:110.13999999999999px;font-size:7.3px;color:#555">3</div>
<div class="t" style="left:821.7px;top:121.23999999999998px;font-size:7.6px;color:#e8763a;-webkit-text-stroke:0.2px #e8763a">003</div>
<div style="left:846.6px;top:106.63999999999999px;width:25.7px;height:26.2px;border:1px solid #e6e6e6;background:#fff"></div>
<div class="t" style="left:850.6px;top:110.13999999999999px;font-size:7.3px;color:#555">4</div>
<div class="t" style="left:849.4px;top:121.23999999999998px;font-size:7.6px;color:#4aa3e4;-webkit-text-stroke:0.2px #4aa3e4">004</div>
<div style="left:874.3000000000001px;top:106.63999999999999px;width:25.7px;height:26.2px;border:1px solid #e6e6e6;background:#fff"></div>
<div class="t" style="left:878.3000000000001px;top:110.13999999999999px;font-size:7.3px;color:#555">5</div>
<div class="t" style="left:877.1px;top:121.23999999999998px;font-size:7.6px;color:#e8504c;-webkit-text-stroke:0.2px #e8504c">005</div>
<div style="left:902.0px;top:106.63999999999999px;width:25.7px;height:26.2px;border:1px solid #e6e6e6;background:#fff"></div>
<div class="t" style="left:906.0px;top:110.13999999999999px;font-size:7.3px;color:#555">6</div>
<div class="t" style="left:904.8px;top:121.23999999999998px;font-size:7.6px;color:#1fb88e;-webkit-text-stroke:0.2px #1fb88e">002</div>
<div style="left:929.7px;top:106.63999999999999px;width:25.7px;height:26.2px;border:1px solid #e6e6e6;background:#fff"></div>
<div class="t" style="left:933.7px;top:110.13999999999999px;font-size:7.3px;color:#555">7</div>
<div class="t" style="left:932.5px;top:121.23999999999998px;font-size:7.6px;color:#1fb88e;-webkit-text-stroke:0.2px #1fb88e">002</div>
<div style="left:957.4000000000001px;top:106.63999999999999px;width:25.7px;height:26.2px;border:1px solid #e6e6e6;background:#fff"></div>
<div class="t" style="left:961.4000000000001px;top:110.13999999999999px;font-size:7.3px;color:#555">8</div>
<div style="left:791.2px;top:135.18px;width:25.7px;height:26.2px;border:1px solid #e6e6e6;background:#fff"></div>
<div class="t" style="left:795.2px;top:138.68px;font-size:7.3px;color:#555">9</div>
<div style="left:818.9000000000001px;top:135.18px;width:25.7px;height:26.2px;border:1px solid #e6e6e6;background:#fff"></div>
<div class="t" style="left:822.9000000000001px;top:138.68px;font-size:7.3px;color:#555">10</div>
<div class="t" style="left:821.7px;top:149.78px;font-size:7.6px;color:#1fb88e;-webkit-text-stroke:0.2px #1fb88e">002</div>
<div style="left:846.6px;top:135.18px;width:25.7px;height:26.2px;border:1px solid #e6e6e6;background:#fff"></div>
<div class="t" style="left:850.6px;top:138.68px;font-size:7.3px;color:#555">11</div>
<div class="t" style="left:849.4px;top:149.78px;font-size:7.6px;color:#1fb88e;-webkit-text-stroke:0.2px #1fb88e">002</div>
<div style="left:874.3000000000001px;top:135.18px;width:25.7px;height:26.2px;border:1px solid #e6e6e6;background:#fff"></div>
<div class="t" style="left:878.3000000000001px;top:138.68px;font-size:7.3px;color:#555">12</div>
<div class="t" style="left:877.1px;top:149.78px;font-size:7.6px;color:#1fb88e;-webkit-text-stroke:0.2px #1fb88e">002</div>
<div style="left:902.0px;top:135.18px;width:25.7px;height:26.2px;border:1px solid #e6e6e6;background:#fff"></div>
<div class="t" style="left:906.0px;top:138.68px;font-size:7.3px;color:#555">13</div>
<div class="t" style="left:904.8px;top:149.78px;font-size:7.6px;color:#1fb88e;-webkit-text-stroke:0.2px #1fb88e">002</div>
<div style="left:929.7px;top:135.18px;width:25.7px;height:26.2px;border:1px solid #e6e6e6;background:#fff"></div>
<div class="t" style="left:933.7px;top:138.68px;font-size:7.3px;color:#555">14</div>
<div class="t" style="left:932.5px;top:149.78px;font-size:7.6px;color:#1fb88e;-webkit-text-stroke:0.2px #1fb88e">002</div>
<div style="left:957.4000000000001px;top:135.18px;width:25.7px;height:26.2px;border:1px solid #e6e6e6;background:#fff"></div>
<div class="t" style="left:961.4000000000001px;top:138.68px;font-size:7.3px;color:#555">15</div>
<div style="left:791.2px;top:163.72px;width:25.7px;height:26.2px;border:1px solid #e6e6e6;background:#fff"></div>
<div class="t" style="left:795.2px;top:167.22px;font-size:7.3px;color:#555">16</div>
<div style="left:818.9000000000001px;top:163.72px;width:25.7px;height:26.2px;border:1px solid #e6e6e6;background:#fff"></div>
<div class="t" style="left:822.9000000000001px;top:167.22px;font-size:7.3px;color:#555">17</div>
<div class="t" style="left:821.7px;top:178.32px;font-size:7.6px;color:#1fb88e;-webkit-text-stroke:0.2px #1fb88e">002</div>
<div style="left:846.6px;top:163.72px;width:25.7px;height:26.2px;border:1px solid #e6e6e6;background:#fff"></div>
<div class="t" style="left:850.6px;top:167.22px;font-size:7.3px;color:#555">18</div>
<div class="t" style="left:849.4px;top:178.32px;font-size:7.6px;color:#1fb88e;-webkit-text-stroke:0.2px #1fb88e">002</div>
<div style="left:874.3000000000001px;top:163.72px;width:25.7px;height:26.2px;border:1px solid #e6e6e6;background:#fff"></div>
<div class="t" style="left:878.3000000000001px;top:167.22px;font-size:7.3px;color:#555">19</div>
<div class="t" style="left:877.1px;top:178.32px;font-size:7.6px;color:#1fb88e;-webkit-text-stroke:0.2px #1fb88e">002</div>
<div style="left:902.0px;top:163.72px;width:25.7px;height:26.2px;border:1px solid #e6e6e6;background:#fff"></div>
<div class="t" style="left:906.0px;top:167.22px;font-size:7.3px;color:#555">20</div>
<div class="t" style="left:904.8px;top:178.32px;font-size:7.6px;color:#1fb88e;-webkit-text-stroke:0.2px #1fb88e">002</div>
<div style="left:929.7px;top:163.72px;width:25.7px;height:26.2px;border:1px solid #e6e6e6;background:#fff"></div>
<div class="t" style="left:933.7px;top:167.22px;font-size:7.3px;color:#555">21</div>
<div class="t" style="left:932.5px;top:178.32px;font-size:7.6px;color:#a38ce6;-webkit-text-stroke:0.2px #a38ce6">006</div>
<div style="left:957.4000000000001px;top:163.72px;width:25.7px;height:26.2px;border:1px solid #e6e6e6;background:#fff"></div>
<div class="t" style="left:961.4000000000001px;top:167.22px;font-size:7.3px;color:#555">22</div>
<div style="left:791.2px;top:192.26px;width:25.7px;height:26.2px;border:1px solid #e6e6e6;background:#fff"></div>
<div class="t" style="left:795.2px;top:195.76px;font-size:7.3px;color:#555">23</div>
<div style="left:818.9000000000001px;top:192.26px;width:25.7px;height:26.2px;border:1px solid #e6e6e6;background:#fff"></div>
<div class="t" style="left:822.9000000000001px;top:195.76px;font-size:7.3px;color:#555">24</div>
<div class="t" style="left:821.7px;top:206.85999999999999px;font-size:7.6px;color:#1fb88e;-webkit-text-stroke:0.2px #1fb88e">002</div>
<div style="left:846.6px;top:192.26px;width:25.7px;height:26.2px;border:1px solid #e6e6e6;background:#fff"></div>
<div class="t" style="left:850.6px;top:195.76px;font-size:7.3px;color:#555">25</div>
<div class="t" style="left:849.4px;top:206.85999999999999px;font-size:7.6px;color:#1fb88e;-webkit-text-stroke:0.2px #1fb88e">002</div>
<div style="left:874.3000000000001px;top:192.26px;width:25.7px;height:26.2px;border:1px solid #e6e6e6;background:#fff"></div>
<div class="t" style="left:878.3000000000001px;top:195.76px;font-size:7.3px;color:#555">26</div>
<div class="t" style="left:877.1px;top:206.85999999999999px;font-size:7.6px;color:#4aa3e4;-webkit-text-stroke:0.2px #4aa3e4">004</div>
<div style="left:902.0px;top:192.26px;width:25.7px;height:26.2px;border:1px solid #e6e6e6;background:#fff"></div>
<div class="t" style="left:906.0px;top:195.76px;font-size:7.3px;color:#555">27</div>
<div class="t" style="left:904.8px;top:206.85999999999999px;font-size:7.6px;color:#1fb88e;-webkit-text-stroke:0.2px #1fb88e">002</div>
<div style="left:929.7px;top:192.26px;width:25.7px;height:26.2px;border:1px solid #e6e6e6;background:#fff"></div>
<div class="t" style="left:933.7px;top:195.76px;font-size:7.3px;color:#555">28</div>
<div class="t" style="left:932.5px;top:206.85999999999999px;font-size:7.6px;color:#1fb88e;-webkit-text-stroke:0.2px #1fb88e">002</div>
<div style="left:957.4000000000001px;top:192.26px;width:25.7px;height:26.2px;border:1px solid #e6e6e6;background:#fff"></div>
<div class="t" style="left:961.4000000000001px;top:195.76px;font-size:7.3px;color:#555">29</div>
<div style="left:791.2px;top:220.79999999999998px;width:25.7px;height:26.2px;border:1px solid #e6e6e6;background:#fff"></div>
<div class="t" style="left:795.2px;top:224.29999999999998px;font-size:7.3px;color:#555">30</div>
<div style="left:818.9000000000001px;top:220.79999999999998px;width:25.7px;height:26.2px;border:1px solid #e6e6e6;background:#fff"></div>
<div class="t" style="left:822.9000000000001px;top:224.29999999999998px;font-size:7.3px;color:#555">31</div>
<div class="t" style="left:821.7px;top:235.39999999999998px;font-size:7.6px;color:#1fb88e;-webkit-text-stroke:0.2px #1fb88e">002</div>
<div style="left:846.6px;top:220.79999999999998px;width:25.7px;height:26.2px;border:1px solid #e6e6e6;background:#fff"></div>
<div class="t" style="left:850.6px;top:224.29999999999998px;font-size:7.3px;color:#d0d0d0">1</div>
<div style="left:874.3000000000001px;top:220.79999999999998px;width:25.7px;height:26.2px;border:1px solid #e6e6e6;background:#fff"></div>
<div class="t" style="left:878.3000000000001px;top:224.29999999999998px;font-size:7.3px;color:#d0d0d0">2</div>
<div style="left:902.0px;top:220.79999999999998px;width:25.7px;height:26.2px;border:1px solid #e6e6e6;background:#fff"></div>
<div class="t" style="left:906.0px;top:224.29999999999998px;font-size:7.3px;color:#d0d0d0">3</div>
<div style="left:929.7px;top:220.79999999999998px;width:25.7px;height:26.2px;border:1px solid #e6e6e6;background:#fff"></div>
<div class="t" style="left:933.7px;top:224.29999999999998px;font-size:7.3px;color:#d0d0d0">4</div>
<div style="left:957.4000000000001px;top:220.79999999999998px;width:25.7px;height:26.2px;border:1px solid #e6e6e6;background:#fff"></div>
<div class="t" style="left:961.4000000000001px;top:224.29999999999998px;font-size:7.3px;color:#d0d0d0">5</div>
<div style="left:791.3px;top:254.7px;width:192.1px;height:102.7px;border:1px solid #e6e6e6;border-radius:3px;background:#fff"></div>
<div style="left:791.3px;top:254.7px;width:192.1px;height:14.6px;background:#ececec;border:1px solid #e2e2e2;border-radius:3px 3px 0 0"></div>
<svg style="position:absolute;left:882px;top:257px" width="9" height="10" viewBox="0 0 9 10"><path d="M1 5 L4.5 2 L8 5 M1 8.5 L4.5 5.5 L8 8.5" stroke="#888" stroke-width="0.8" fill="none"/></svg>
<div style="left:976px;top:269.3px;width:7px;height:88px;background:#f4f4f4"></div>
<div style="left:976.3px;top:270.7px;width:6.4px;height:30px;background:#cfcfcf"></div>
<svg style="position:absolute;left:977.5px;top:352px" width="4" height="4" viewBox="0 0 4 4"><path d="M0.5 1 L3.5 1 L2 3Z" fill="#888"/></svg>
<div class="t" style="left:800px;top:282.09999999999997px;font-size:7.8px;color:#555"><span style="position:static;color:#f0b03c">001</span>/管理白班</div>
<div class="t" style="left:894px;top:282.09999999999997px;font-size:7.8px;color:#555"><span style="position:static;color:#e8504c">005</span>/设计早班</div>
<div style="left:856.2px;top:281.59999999999997px;width:8.5px;height:8.5px;border:1px solid #ddd;border-radius:1px;background:#fff"></div>
<div style="left:950.6px;top:281.59999999999997px;width:8.5px;height:8.5px;border:1px solid #ddd;border-radius:1px;background:#fff"></div>
<div class="t" style="left:800px;top:302.4px;font-size:7.8px;color:#555"><span style="position:static;color:#1fb88e">002</span>/管理晚班</div>
<div class="t" style="left:894px;top:302.4px;font-size:7.8px;color:#555"><span style="position:static;color:#a38ce6">006</span>/设计中班</div>
<div style="left:856.2px;top:301.9px;width:8.5px;height:8.5px;border:1px solid #ddd;border-radius:1px;background:#fff"></div>
<div style="left:950.6px;top:301.9px;width:8.5px;height:8.5px;border:1px solid #ddd;border-radius:1px;background:#fff"></div>
<div class="t" style="left:800px;top:322.7px;font-size:7.8px;color:#555"><span style="position:static;color:#e8763a">003</span>/员工白班</div>
<div class="t" style="left:894px;top:322.7px;font-size:7.8px;color:#555"><span style="position:static;color:#3a7cc0">007</span>/设计晚班</div>
<div style="left:856.2px;top:322.2px;width:8.5px;height:8.5px;background:#2a72b8;border-radius:1px"></div>
<svg style="position:absolute;left:857.2px;top:323.2px" width="6.5" height="6.5" viewBox="0 0 7 7"><path d="M1.2 3.6 L2.9 5.2 L5.8 1.6" stroke="#fff" stroke-width="0.9" fill="none"/></svg>
<div style="left:950.6px;top:322.2px;width:8.5px;height:8.5px;border:1px solid #ddd;border-radius:1px;background:#fff"></div>
<div class="t" style="left:800px;top:342.99999999999994px;font-size:7.8px;color:#555"><span style="position:static;color:#4aa3e4">004</span>/员工晚班</div>
<div class="t" style="left:894px;top:342.99999999999994px;font-size:7.8px;color:#555"><span style="position:static;color:#c07a2a">008</span>/直落白班</div>
<div style="left:856.2px;top:342.49999999999994px;width:8.5px;height:8.5px;border:1px solid #ddd;border-radius:1px;background:#fff"></div>
<div style="left:950.6px;top:342.49999999999994px;width:8.5px;height:8.5px;border:1px solid #ddd;border-radius:1px;background:#fff"></div>
<div style="left:938.9px;top:365.4px;width:36px;height:15.2px;background:#1a67b2;border-radius:2px"></div>
<div class="t c" style="left:956.9px;top:369.3px;font-size:7.3px;color:#fff">保存</div>
<div style="left:791px;top:399px;width:12px;height:12px;border:1px solid #e3e3e3;border-radius:50%;background:#fff"></div>
<div style="left:793.5px;top:401.5px;width:7px;height:7px;background:#2a72b5;border-radius:50%"></div>
<div class="t" style="left:807.5px;top:401.3px;font-size:7.3px;color:#555">今天</div>
<div style="left:842.7px;top:399px;width:12.5px;height:12.5px;border-radius:50%;background:#ebebeb"></div>
<div class="t" style="left:858.8px;top:401.3px;font-size:7.3px;color:#555">含前一天</div>
<div style="left:905px;top:399px;width:12.5px;height:12.5px;border-radius:50%;background:#ebebeb"></div>
<div class="t" style="left:921.3px;top:401.3px;font-size:7.3px;color:#555">含后一天</div>
<div style="left:791.4px;top:418.2px;width:191.5px;height:117.8px;border:1px solid #efefef;border-top:none;background:#fff"></div>
<div style="left:791.4px;top:418.2px;width:191.5px;height:24px;background:#ededed"></div>
<div class="t c" style="left:825px;top:426.8px;font-size:7.4px;color:#333;-webkit-text-stroke:0.05px #333">时间</div>
<div class="t c" style="left:885.2px;top:426.8px;font-size:7.4px;color:#333;-webkit-text-stroke:0.05px #333">卡号</div>
<div class="t c" style="left:926.3px;top:426.8px;font-size:7.4px;color:#333;-webkit-text-stroke:0.05px #333">机号</div>
<div class="t c" style="left:964.4px;top:426.8px;font-size:7.4px;color:#333;-webkit-text-stroke:0.05px #333">操作</div>
<div class="t" style="left:797.6px;top:450.0px;font-size:7.6px;color:#555">2019/08/01 10:00</div>
<div class="t c" style="left:886.3px;top:450.0px;font-size:7.6px;color:#555">0123</div>
<div class="t c" style="left:926.8px;top:450.0px;font-size:7.6px;color:#555">001</div>
<div class="t c" style="left:964.8px;top:450.5px;font-size:7.3px;color:#3a7cc0">作废</div>
<div style="left:791.4px;top:465.40000000000003px;width:191.5px;height:1px;background:#f0f0f0"></div>
<div class="t" style="left:797.6px;top:473.3px;font-size:7.6px;color:#555">2019/08/01 10:00</div>
<div class="t c" style="left:886.3px;top:473.3px;font-size:7.6px;color:#555">0123</div>
<div class="t c" style="left:926.8px;top:473.3px;font-size:7.6px;color:#555">001</div>
<div class="t c" style="left:964.8px;top:473.8px;font-size:7.3px;color:#3a7cc0">作废</div>
<div style="left:791.4px;top:488.70000000000005px;width:191.5px;height:1px;background:#f0f0f0"></div>
<div class="t" style="left:797.6px;top:496.6px;font-size:7.6px;color:#555">2019/08/01 10:00</div>
<div class="t c" style="left:886.3px;top:496.6px;font-size:7.6px;color:#555">0123</div>
<div class="t c" style="left:926.8px;top:496.6px;font-size:7.6px;color:#555">001</div>
<div class="t c" style="left:964.8px;top:497.1px;font-size:7.3px;color:#3a7cc0">作废</div>
<div style="left:791.4px;top:512.0px;width:191.5px;height:1px;background:#f0f0f0"></div>
<div class="t" style="left:797.6px;top:519.9000000000001px;font-size:7.6px;color:#555">2019/08/01 10:00</div>
<div class="t c" style="left:886.3px;top:519.9000000000001px;font-size:7.6px;color:#555">0123</div>
<div class="t c" style="left:926.8px;top:519.9000000000001px;font-size:7.6px;color:#555">001</div>
<div class="t c" style="left:964.8px;top:520.4000000000001px;font-size:7.3px;color:#3a7cc0">作废</div>
</body></html>
